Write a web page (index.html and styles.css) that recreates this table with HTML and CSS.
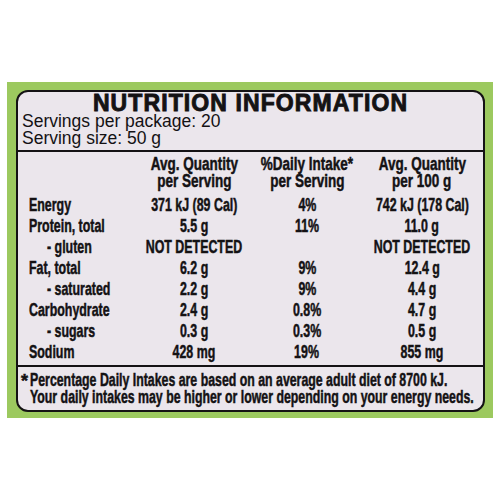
FILE: index.html
```html
<!DOCTYPE html>
<html>
<head>
<meta charset="utf-8">
<link rel="stylesheet" href="styles.css">
</head>
<body>
<div class="panel">
  <div class="label">
    <div class="title">NUTRITION INFORMATION</div>
    <div class="serv">Servings per package: 20</div>
    <div class="serv">Serving size: 50 g</div>
    <div class="table">
      <div class="hd"></div>
      <div class="hd"><span class="t">Avg. Quantity</span><span class="t">per Serving</span></div>
      <div class="hd"><span class="t">%Daily Intake*</span><span class="t">per Serving</span></div>
      <div class="hd"><span class="t">Avg. Quantity</span><span class="t">per 100 g</span></div>

      <div class="nm"><span class="t">Energy</span></div><div class="v"><span class="t">371 kJ (89 Cal)</span></div><div class="v"><span class="t">4%</span></div><div class="v"><span class="t">742 kJ (178 Cal)</span></div>
      <div class="nm"><span class="t">Protein, total</span></div><div class="v"><span class="t">5.5 g</span></div><div class="v"><span class="t">11%</span></div><div class="v"><span class="t">11.0 g</span></div>
      <div class="nm sub"><span class="t">- gluten</span></div><div class="v"><span class="t">NOT DETECTED</span></div><div class="v"></div><div class="v"><span class="t">NOT DETECTED</span></div>
      <div class="nm"><span class="t">Fat, total</span></div><div class="v"><span class="t">6.2 g</span></div><div class="v"><span class="t">9%</span></div><div class="v"><span class="t">12.4 g</span></div>
      <div class="nm sub"><span class="t">- saturated</span></div><div class="v"><span class="t">2.2 g</span></div><div class="v"><span class="t">9%</span></div><div class="v"><span class="t">4.4 g</span></div>
      <div class="nm"><span class="t">Carbohydrate</span></div><div class="v"><span class="t">2.4 g</span></div><div class="v"><span class="t">0.8%</span></div><div class="v"><span class="t">4.7 g</span></div>
      <div class="nm sub"><span class="t">- sugars</span></div><div class="v"><span class="t">0.3 g</span></div><div class="v"><span class="t">0.3%</span></div><div class="v"><span class="t">0.5 g</span></div>
      <div class="nm"><span class="t">Sodium</span></div><div class="v"><span class="t">428 mg</span></div><div class="v"><span class="t">19%</span></div><div class="v"><span class="t">855 mg</span></div>
    </div>
    <div class="foot">
      <div class="fl"><span class="star">*</span><span class="t">Percentage Daily Intakes are based on an average adult diet of 8700 kJ.</span></div>
      <div class="fl"><span class="t">Your daily intakes may be higher or lower depending on your energy needs.</span></div>
    </div>
  </div>
</div>
</body>
</html>
```
FILE: styles.css
```css
html, body {
  margin: 0;
  padding: 0;
  background: #ffffff;
}
body {
  width: 500px;
  height: 500px;
  overflow: hidden;
}
.panel {
  margin: 82px 0 0 7px;
  width: 486px;
  height: 336px;
  box-sizing: border-box;
  padding: 8px 8px 6px 9px;
  background: #9cc95f;
}
.label {
  box-sizing: border-box;
  height: 322px;
  border: 2.5px solid #141214;
  border-radius: 12px;
  background: #ebe6ec;
  color: #141214;
  display: flex;
  flex-direction: column;
  overflow: hidden;
}
.title {
  font-family: "Liberation Sans", Arial, sans-serif;
  font-weight: 700;
  font-size: 23px;
  line-height: 20px;
  text-align: center;
  letter-spacing: 1.1px;
  -webkit-text-stroke: 0.9px #141214;
  padding-top: 1px;
}
.serv {
  font-family: "Liberation Sans", Arial, sans-serif;
  font-size: 17.5px;
  line-height: 17px;
  padding-left: 4px;
}
.table {
  border-top: 2px solid #141214;
  border-bottom: 2px solid #141214;
  margin-top: 3px;
  padding: 3px 0 3px 11px;
  display: grid;
  grid-template-columns: 110px 110px 116px 114px;
  font-family: "Liberation Sans", Arial, sans-serif;
  font-weight: 700;
  font-size: 18.5px;
  line-height: 21px;
}
.t {
  display: inline-block;
  white-space: nowrap;
  transform: scaleX(0.67);
  -webkit-text-stroke: 0.5px #141214;
}
.hd {
  display: flex;
  flex-direction: column;
  align-items: center;
  font-size: 19px;
  line-height: 17px;
  padding-bottom: 5px;
}
.hd .t {
  transform: scaleX(0.71);
}
.nm {
  white-space: nowrap;
}
.nm .t {
  transform-origin: 0 50%;
}
.nm.sub {
  padding-left: 18px;
}
.v {
  display: flex;
  justify-content: center;
}
.foot {
  font-family: "Liberation Sans", Arial, sans-serif;
  font-weight: 700;
  font-size: 18px;
  line-height: 16.5px;
  padding: 5px 0 0 12px;
}
.fl {
  white-space: nowrap;
  position: relative;
}
.fl .t {
  transform: scaleX(0.685);
  transform-origin: 0 50%;
}
.star {
  position: absolute;
  left: -9px;
  top: 1px;
  -webkit-text-stroke: 0.5px #141214;
}
```
